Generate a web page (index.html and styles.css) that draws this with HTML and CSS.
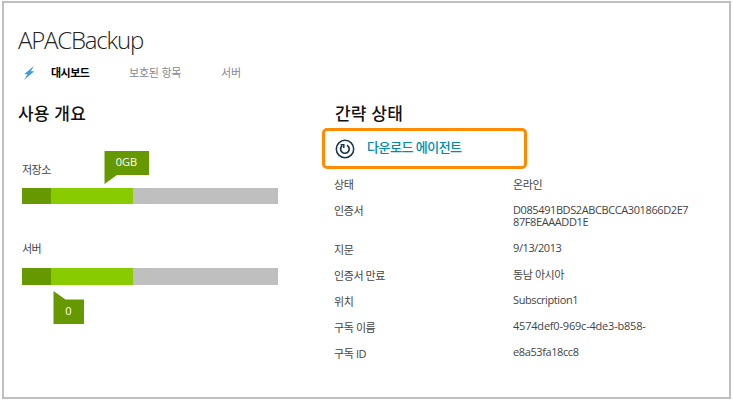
FILE: index.html
```
<!DOCTYPE html>
<html lang="ko">
<head>
<meta charset="utf-8">
<title>APACBackup</title>
<link rel="stylesheet" href="styles.css">
</head>
<body>
<main class="frame">
  <h1 class="title">APACBackup</h1>
  <nav class="tabs">
    <svg class="bolt" width="12" height="16" viewBox="0 0 12 16"><path d="M10.800 1 1.200 9.200h3.300L1 15l10.300-8.700H7.800z" fill="#3f9bdc"/></svg>
    <a class="tab tab-active">대시보드</a>
    <a class="tab tab-items">보호된 항목</a>
    <a class="tab">서버</a>
  </nav>
  <div class="columns">
    <section class="usage">
      <h2>사용 개요</h2>
      <div class="meter meter-storage">
        <span class="label">저장소</span>
        <div class="bar"><i class="used"></i><i class="allocated"></i></div>
        <div class="flag flag-top"><svg width="45" height="33"><path d="M.5 0H45v24H13L.5 33z" fill="#669900"/></svg><span>0GB</span></div>
      </div>
      <div class="meter meter-servers">
        <span class="label">서버</span>
        <div class="bar"><i class="used"></i><i class="allocated"></i></div>
        <div class="flag flag-bottom"><svg width="31" height="33"><path d="M.5 0 12.500 8.500H31V33H.5z" fill="#669900"/></svg><span>0</span></div>
      </div>
    </section>
    <section class="status">
      <h2>간략 상태</h2>
      <a class="agent">
        <svg width="20" height="20" viewBox="0 0 20 20" fill="none" stroke="#17344b"><circle cx="10" cy="10" r="8.700" stroke-width="1.500"/><path d="M12 6.200A4.300 4.300 0 1 1 7.100 6.700" stroke-width="1.700"/><path d="M5.600 5.700H8.800V9" stroke-width="1.500"/></svg>
        <span>다운로드 에이전트</span>
      </a>
      <dl class="details">
        <div><dt>상태</dt><dd class="korean">온라인</dd></div>
        <div><dt>인증서</dt><dd>D085491BDS2ABCBCCA301866D2E7<br>87F8EAAADD1E</dd></div>
        <div class="low"><dt>지문</dt><dd>9/13/2013</dd></div>
        <div class="low"><dt>인증서 만료</dt><dd class="korean">동남 아시아</dd></div>
        <div class="low"><dt>위치</dt><dd>Subscription1</dd></div>
        <div class="low"><dt>구독 이름</dt><dd class="guid">4574def0-969c-4de3-b858-</dd></div>
        <div class="low"><dt>구독 ID</dt><dd>e8a53fa18cc8</dd></div>
      </dl>
    </section>
  </div>
</main>
</body>
</html>
```
FILE: styles.css
```
* { box-sizing: border-box; }
body {
  margin: 0;
  padding: 1px 2px 2px;
  height: 401px;
  background: #fff;
  color: #444;
  font: 11px/12px "Open Sans", "Noto Sans CJK KR", sans-serif;
}
.frame {
  height: 398px;
  border: 2px solid #bfbfbf;
  padding: 21px 14px 0;
}
.title {
  margin: 0;
  height: 32px;
  color: #222;
  font-size: 24px;
  font-weight: 300;
  line-height: 32px;
  letter-spacing: -1.2px;
}
.tabs {
  display: flex;
  align-items: center;
  height: 34px;
  color: #858890;
  white-space: nowrap;
}
.bolt { margin: 0 16px 0 5px; }
.tab { letter-spacing: -0.2px; }
.tab-active { width: 78px; color: #000; font-weight: 700; letter-spacing: -0.5px; }
.tab-items { width: 92px; }
.columns { display: grid; grid-template-columns: 316px 1fr; }
.usage, .status { padding-top: 1px; }
h2 {
  margin: 0;
  height: 37px;
  padding-top: 11px;
  color: #111;
  font-size: 17px;
  font-weight: 500;
  line-height: 24px;
  letter-spacing: 0.2px;
}
.status h2 { padding-left: 1px; }
.meter {
  position: relative;
  display: flex;
  flex-direction: column;
  gap: 12px;
  width: 256px;
  margin-left: 4px;
}
.meter-storage { margin-top: 36px; margin-bottom: 39px; }
.meter-servers { gap: 13px; }
.label { letter-spacing: -0.5px; }
.bar { display: flex; height: 16px; background: #bfbfbf; }
.meter-servers .bar { height: 17px; }
.used { width: 29px; background: #690; }
.allocated { width: 82px; background: #8c0; }
.flag { position: absolute; color: #fff; }
.flag svg { display: block; }
.flag span { position: absolute; inset: 5px 0 auto; text-align: center; }
.flag-top { left: 82px; top: -13px; }
.flag-bottom { left: 31px; top: 48px; }
.flag-bottom span { top: 14px; }
.agent {
  display: flex;
  align-items: center;
  gap: 12px;
  width: 205px;
  height: 41px;
  margin: 0 0 9px -12px;
  padding-left: 10px;
  border: 3px solid #ff8c00;
  border-radius: 5px;
  color: #008caa;
  font-size: 13px;
  font-weight: 500;
  letter-spacing: -0.5px;
}
.agent span { margin-top: -3px; }
.details { display: flex; flex-direction: column; gap: 14px; margin: 0; }
.details div { display: grid; grid-template-columns: 179px 1fr; }
dt, dd { margin: 0; letter-spacing: -0.4px; white-space: nowrap; }
dt, .korean { padding-top: 1px; margin-bottom: -1px; }
.low dt { padding-top: 2px; margin-bottom: -2px; }
.guid { letter-spacing: -0.2px; }
```
